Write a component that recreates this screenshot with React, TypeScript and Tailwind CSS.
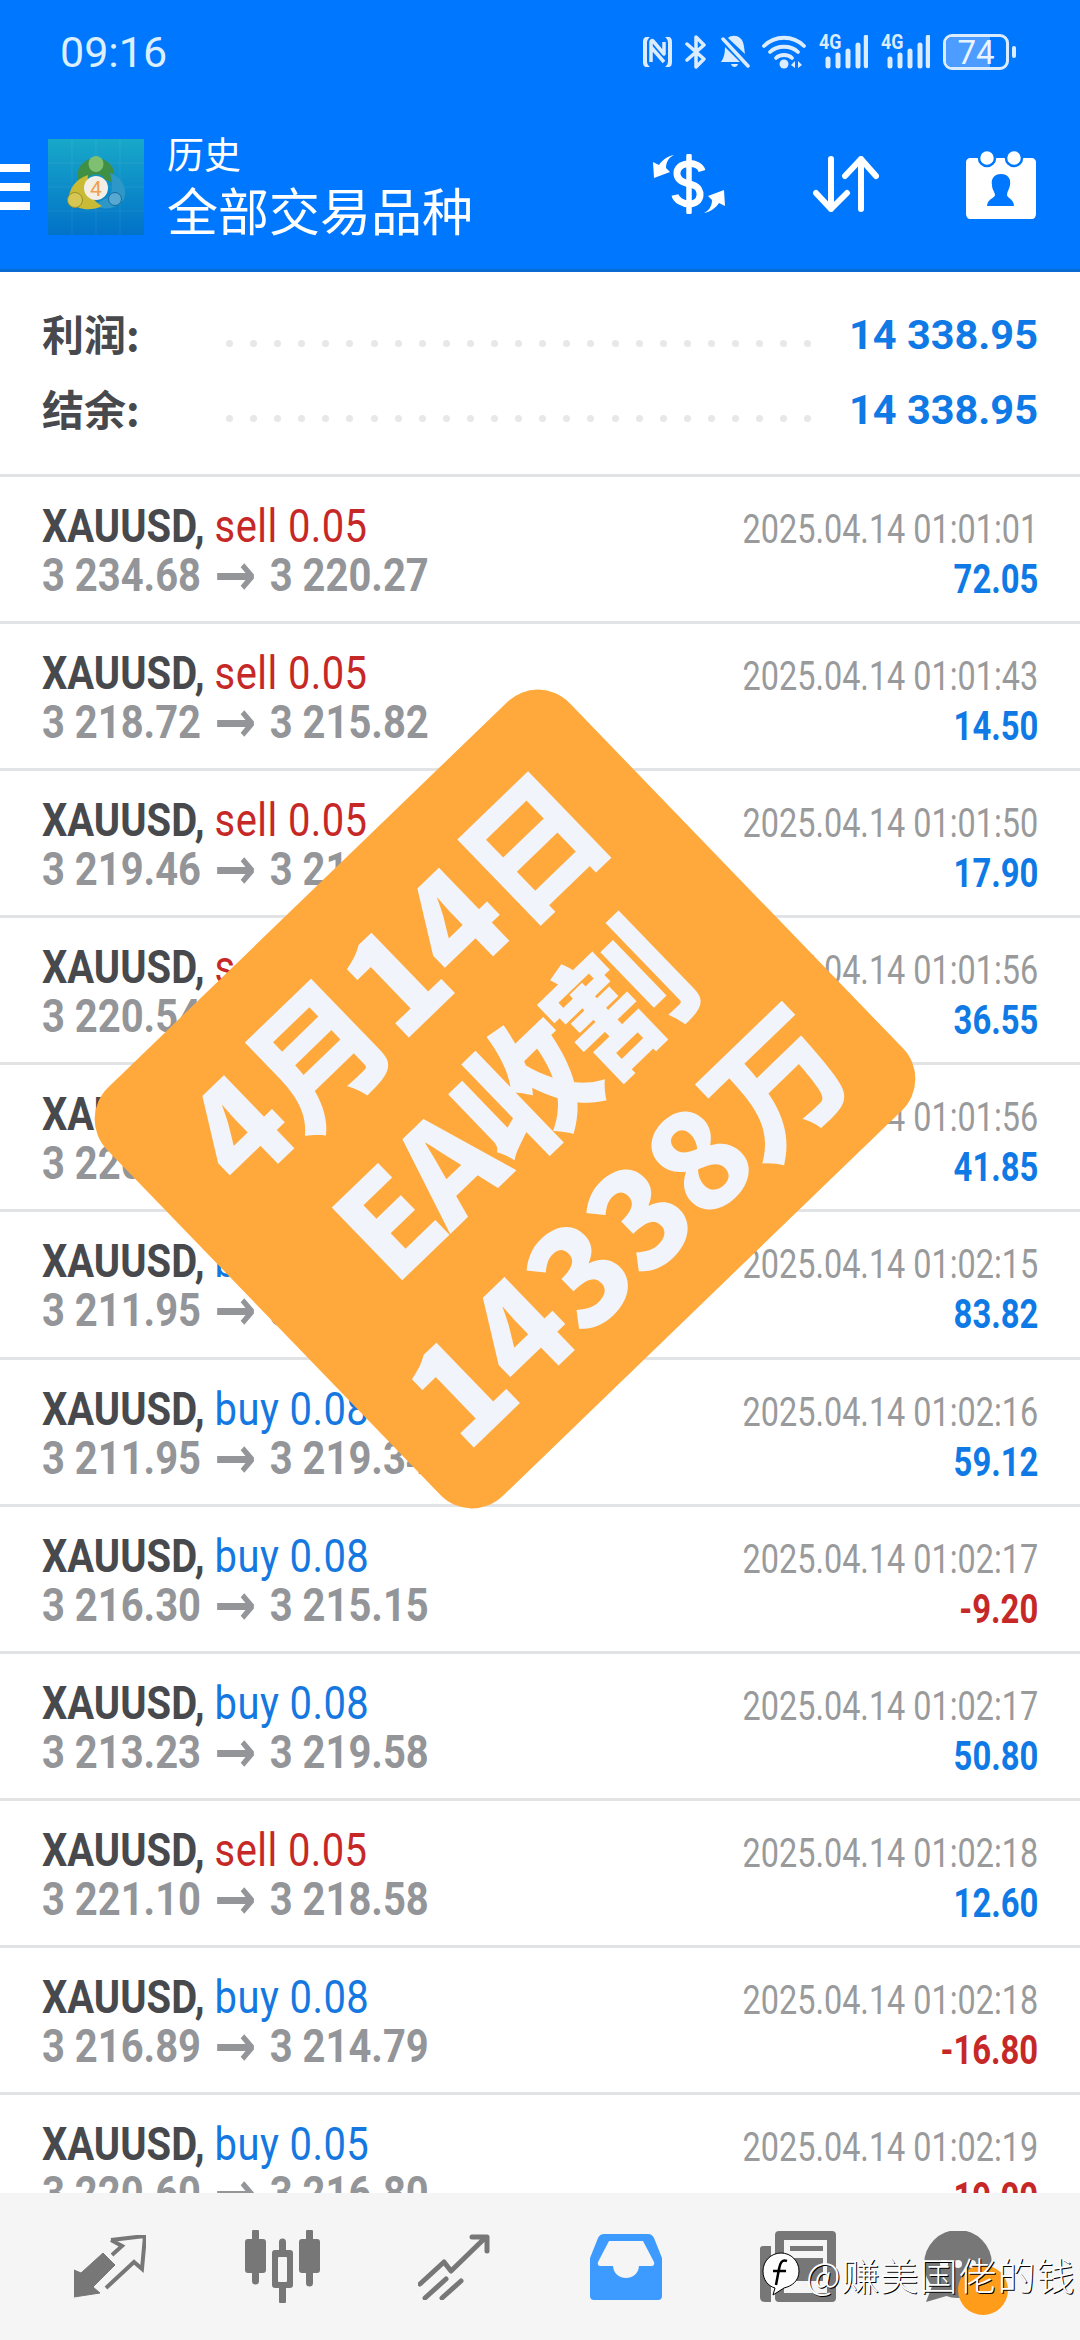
import React from "react";

const rows = [
  { s: "sell 0.05", a: "3 234.68", b: "3 220.27", t: "01:01:01", p: "72.05" },
  { s: "sell 0.05", a: "3 218.72", b: "3 215.82", t: "01:01:43", p: "14.50" },
  { s: "sell 0.05", a: "3 219.46", b: "3 215.88", t: "01:01:50", p: "17.90" },
  { s: "sell 0.05", a: "3 220.54", b: "3 213.23", t: "01:01:56", p: "36.55" },
  { s: "sell 0.05", a: "3 220.60", b: "3 212.23", t: "01:01:56", p: "41.85" },
  { s: "buy 0.08", a: "3 211.95", b: "3 222.43", t: "01:02:15", p: "83.82" },
  { s: "buy 0.08", a: "3 211.95", b: "3 219.34", t: "01:02:16", p: "59.12" },
  { s: "buy 0.08", a: "3 216.30", b: "3 215.15", t: "01:02:17", p: "-9.20" },
  { s: "buy 0.08", a: "3 213.23", b: "3 219.58", t: "01:02:17", p: "50.80" },
  { s: "sell 0.05", a: "3 221.10", b: "3 218.58", t: "01:02:18", p: "12.60" },
  { s: "buy 0.08", a: "3 216.89", b: "3 214.79", t: "01:02:18", p: "-16.80" },
  { s: "buy 0.05", a: "3 220.60", b: "3 216.80", t: "01:02:19", p: "-19.00" },
];

const ST = "#dcecff";

function Signal() {
  return (
    <div className="relative w-[49px] h-[34px]">
      <span className="absolute left-0 -top-[3px] text-[21px] leading-[20px] font-bold text-[#dcecff] font-['Roboto',sans-serif] scale-x-[.85] origin-left">4G</span>
      <svg width="49" height="34" viewBox="0 0 49 34" className="absolute left-0 top-0">
        <g stroke={ST} strokeWidth="5" strokeLinecap="round">
          <path d="M9 24V31M19 20V31M29 16V31M39 10V31" />
          <path d="M47 2V31" strokeWidth="4.5" />
        </g>
      </svg>
    </div>
  );
}

function StatusIcons() {
  return (
    <div className="flex items-center">
      <svg width="31" height="32" viewBox="0 0 31 32">
        <path d="M8 1H5C2 1 1 3 1 6V26C1 29 2 31 5 31H8C6 29 5 28 5 25V7C5 4 6 3 8 1Z" fill={ST} />
        <path d="M23 1H26C29 1 30 3 30 6V26C30 29 29 31 26 31H23C25 29 26 28 26 25V7C26 4 25 3 23 1Z" fill={ST} />
        <path d="M9 26V6C9 5 10 4 11 5L22 18V6M22 26L9 11" stroke={ST} strokeWidth="3.5" fill="none" strokeLinejoin="round" />
      </svg>
      <svg width="22" height="34" viewBox="0 0 22 34" className="ml-[12px]">
        <path d="M2 9L19 24L11 32V2L19 10L2 25" stroke={ST} strokeWidth="3.5" fill="none" strokeLinecap="round" strokeLinejoin="round" />
      </svg>
      <svg width="30" height="34" viewBox="0 0 30 34" className="ml-[13px]">
        <path d="M3 4L28 31" stroke={ST} strokeWidth="3.5" strokeLinecap="round" />
        <path d="M8 3C11 0 17 0 20 3C24 6 24 12 25 19ZM5 12L20 27H1C4 23 5 18 5 12ZM11 29H18C17 33 12 33 11 29Z" fill={ST} />
      </svg>
      <svg width="44" height="34" viewBox="0 0 44 34" className="ml-[12px]">
        <g stroke={ST} strokeWidth="3.8" fill="none" strokeLinecap="round">
          <path d="M2 11C13 0 31 0 42 11" />
          <path d="M8 17C15 10 29 10 36 17" />
          <path d="M14 23C18 19 26 19 30 23" />
        </g>
        <circle cx="22" cy="29" r="4.5" fill={ST} />
        <path d="M33 26V33L29 30ZM36 26V33L40 30Z" fill={ST} />
      </svg>
      <div className="ml-[13px]"><Signal /></div>
      <div className="ml-[13px]"><Signal /></div>
      <div className="ml-[13px] relative w-[66px] h-[36px] rounded-[9px] border-[3px] border-[#dcecff] overflow-hidden flex items-center justify-center">
        <div className="absolute left-0 top-0 bottom-0 w-[74%] bg-[#4d9cff]" />
        <span className="relative text-[33px] leading-[33px] text-[#eaf4ff] font-['Roboto',sans-serif]">74</span>
      </div>
      <div className="ml-[3px] w-[4px] h-[12px] rounded-[2px] bg-[#dcecff]" />
    </div>
  );
}

function Logo() {
  return (
    <svg width="96" height="96" viewBox="0 0 96 96" className="ml-[18px] shrink-0">
      <defs>
        <linearGradient id="bgl" x1="0" y1="0" x2="0" y2="1">
          <stop offset="0" stopColor="#18a8c8" />
          <stop offset="1" stopColor="#0272c8" />
        </linearGradient>
      </defs>
      <rect width="96" height="96" fill="url(#bgl)" />
      <path d="M24 0V96M48 0V96M72 0V96M0 24H96M0 48H96M0 72H96" stroke="#ffffff" strokeOpacity=".07" strokeWidth="1" />
      <path d="M31 44C26 28 36 20 48 19C60 20 70 28 65 44L56 40C56 34 40 34 40 40Z" fill="#3f8f45" />
      <ellipse cx="48" cy="25" rx="7.5" ry="8" fill="#7fbf72" />
      <path d="M62 34C74 38 80 50 76 60C70 70 56 72 46 66L56 60C64 58 66 48 62 34Z" fill="#2d97c8" />
      <circle cx="67" cy="60" r="6.5" fill="#58a9d2" stroke="#17699f" strokeWidth="1" />
      <path d="M40 36C28 40 20 50 21 62C30 72 44 72 54 67C44 62 38 50 40 36Z" fill="#c9bb35" />
      <circle cx="27" cy="61" r="7.5" fill="#d6c755" stroke="#97902a" strokeWidth="1" />
      <circle cx="48" cy="49" r="12" fill="#f3efe6" />
      <text x="48" y="57" textAnchor="middle" fontSize="21" fontFamily="Roboto" fill="#f0a050">4</text>
    </svg>
  );
}

function DollarIcon() {
  const arrow = "M21 1C15 4 13 9 13 14L17 18L1 24L0 8L6 11C9 6 15 2 21 1Z";
  return (
    <svg width="72" height="60" viewBox="0 0 72 60">
      <path d="M36 2V58" stroke="#fff" strokeWidth="5.5" strokeLinecap="round" />
      <path d="M49 17C46 7 26 7 24 18C23 28 34 29 40 31C50 34 50 50 36 50C30 50 23 46 22 41" stroke="#fff" strokeWidth="7" fill="none" />
      <path d={arrow} fill="#fff" />
      <path d={arrow} fill="#fff" transform="rotate(180 36 30)" />
    </svg>
  );
}

function SortIcon() {
  return (
    <svg width="66" height="56" viewBox="0 0 66 56" className="ml-[88px]">
      <g stroke="#fff" strokeWidth="6" fill="none" strokeLinecap="round" strokeLinejoin="round">
        <path d="M18 3V53M3 37L18 53L34 37" />
        <path d="M48 53V3M32 20L48 3L63 20" />
      </g>
    </svg>
  );
}

function CalIcon() {
  return (
    <svg width="70" height="70" viewBox="0 0 70 70" className="ml-[87px]">
      <path d="M4 9H66C68 9 70 11 70 13V65C70 68 68 70 66 70H4C2 70 0 68 0 65V13C0 11 2 9 4 9Z" fill="#fff" />
      <circle cx="21" cy="9" r="8" fill="#fff" stroke="#0077ff" strokeWidth="2.5" />
      <circle cx="48" cy="9" r="8" fill="#fff" stroke="#0077ff" strokeWidth="2.5" />
      <path d="M35 25C43 25 45 31 44 36C43 41 41 43 41 46C41 49 48 50 48 57H21C21 50 29 49 29 46C29 43 26 41 26 36C25 31 27 25 35 25Z" fill="#0077ff" />
    </svg>
  );
}

function Row({ r }: { r: (typeof rows)[number] }) {
  const sell = r.s.startsWith("sell");
  const neg = r.p.startsWith("-");
  return (
    <div className="h-[147.1px] shrink-0 border-b-[3px] border-[#e2e3e4] flex justify-between pl-[42px] pr-[42px] font-['Roboto',sans-serif]">
      <div className="pt-[24px]">
        <div className="h-[50px] text-[47px] leading-[50px] whitespace-nowrap origin-left scale-x-[.85]">
          <span className="font-bold text-[#48494c]">XAUUSD, </span>
          <span className={sell ? "text-[#c62828] tracking-[0.5px]" : "text-[#1478e0] tracking-[0.5px]"}>{r.s}</span>
        </div>
        <div className="h-[48px] text-[47px] leading-[48px] whitespace-nowrap origin-left scale-x-[.85] font-bold text-[#939598]">
          {r.a} <span className="relative top-[4px] mx-[4px] font-['DejaVu_Sans',sans-serif] text-[59px] leading-[0]">→</span> {r.b}
        </div>
      </div>
      <div className="pt-[29px] flex flex-col items-end">
        <div className="h-[46px] text-[41px] leading-[46px] whitespace-nowrap origin-right scale-x-[.79] text-[#999a9b]">2025.04.14 {r.t}</div>
        <div className="h-[50px] pt-[3px] text-[40px] leading-[50px] whitespace-nowrap origin-right scale-x-[.82] font-bold">
          <span className={neg ? "text-[#c62828]" : "text-[#0f7ae5]"}>{r.p}</span>
        </div>
      </div>
    </div>
  );
}

function Summary({ label }: { label: string }) {
  return (
    <div className="h-[75px] flex items-center pl-[42px] pr-[42px]">
      <span className="w-[184px] -mt-[6px] text-[42px] font-bold text-[#48494c] font-['Noto_Sans_CJK_SC',sans-serif]">{label}</span>
      <div className="flex gap-[17.1px] pt-[16px]">
        {Array.from({ length: 25 }).map((_, i) => (
          <span key={i} className="w-[7px] h-[7px] rounded-full bg-[#e8e8e8]" />
        ))}
      </div>
      <span className="ml-auto text-[41.5px] font-bold text-[#0f7ae5] font-['Roboto',sans-serif]">14 338.95</span>
    </div>
  );
}

function Nav() {
  return (
    <div className="h-[147px] shrink-0 bg-[#f5f5f5] grid grid-cols-6 px-[24px] items-center justify-items-center relative">
      <svg width="72" height="64" viewBox="0 0 72 64">
        <path d="M0 62V35L7 38L29 18L41 30L19 52L26 58Z" fill="#777" stroke="#777" strokeWidth="1" strokeLinejoin="round" />
        <path d="M37 5L71 1L68 34L60 27L32 53M38 20L48 11L37 5" stroke="#777" strokeWidth="4" fill="none" />
      </svg>
      <svg width="75" height="73" viewBox="0 0 75 73">
        <path d="M10.5 2V51M37.5 12V71M64.5 2V53" stroke="#777" strokeWidth="7" strokeLinecap="round" />
        <rect x="0" y="9" width="21" height="34" rx="3" fill="#777" />
        <rect x="54" y="9" width="21" height="34" rx="3" fill="#777" />
        <rect x="27" y="20" width="21" height="38" rx="3" fill="#777" />
        <rect x="33" y="27" width="9" height="25" rx="1" fill="#f5f5f5" />
      </svg>
      <svg width="72" height="66" viewBox="0 0 72 66">
        <path d="M2 50L26 28L33 37L67 4M54 3H69V17M7 64L28 45M24 64L43 47" stroke="#777" strokeWidth="5" fill="none" strokeLinecap="round" strokeLinejoin="round" />
      </svg>
      <svg width="72" height="66" viewBox="0 0 72 66">
        <path fillRule="evenodd" d="M14 0H58Q62 0 64 4L72 24V62Q72 66 68 66H4Q0 66 0 62V24L8 4Q10 0 14 0ZM19 7L8 28Q7 32 11 32H23C24 48 48 48 49 32H61Q65 32 64 28L53 7Z" fill="#3d9bff" />
      </svg>
      <svg width="76" height="71" viewBox="0 0 76 71">
        <path d="M0 18Q0 15 3 15H11V71H5Q0 71 0 66Z" fill="#777" />
        <path fillRule="evenodd" d="M19 0H72Q76 0 76 4V67Q76 71 72 71H19Q15 71 15 67V4Q15 0 19 0ZM24 9V62H67V9Z" fill="#777" />
        <path d="M30 15H63V20H30ZM30 27H63V50H30Z" fill="#777" />
      </svg>
      <div className="relative w-[72px] h-[72px] mr-[24px]">
        <svg width="72" height="72" viewBox="0 0 72 72">
          <circle cx="36" cy="33" r="34" fill="#777" />
          <path d="M12 50L4 71L28 64Z" fill="#777" />
          <circle cx="22" cy="33" r="4" fill="#f5f5f5" />
          <circle cx="36" cy="33" r="4" fill="#f5f5f5" />
          <circle cx="50" cy="33" r="4" fill="#f5f5f5" />
        </svg>
        <span className="absolute left-[36px] top-[34px] w-[50px] h-[50px] rounded-full bg-[#ff9c1a]" />
      </div>
    </div>
  );
}

export default function App() {
  return (
    <div className="relative w-[1080px] h-[2340px] overflow-hidden bg-white flex flex-col">
      <header className="h-[272px] shrink-0 bg-[#0077ff] border-b-[3px] border-[#0a69d2] flex flex-col">
        <div className="h-[104px] flex items-center justify-between pl-[60px] pr-[64px]">
          <span className="text-[43px] text-[#dcefff] font-['Roboto',sans-serif]">09:16</span>
          <StatusIcons />
        </div>
        <div className="flex-1 flex items-center pr-[44px]">
          <div className="flex flex-col gap-[11px] shrink-0">
            <span className="w-[30px] h-[8px] bg-white" />
            <span className="w-[30px] h-[8px] bg-white" />
            <span className="w-[30px] h-[8px] bg-white" />
          </div>
          <Logo />
          <div className="ml-[23px] flex flex-col text-white font-['Noto_Sans_CJK_SC',sans-serif]">
            <span className="text-[37px] leading-[46px] -mt-[3px]">历史</span>
            <span className="text-[51px] leading-[62px] mt-[2px]">全部交易品种</span>
          </div>
          <div className="ml-auto mb-[6px] flex items-center">
            <DollarIcon />
            <SortIcon />
            <CalIcon />
          </div>
        </div>
      </header>

      <section className="h-[205px] shrink-0 border-b-[3px] border-[#e2e3e4] pt-[26px]">
        <Summary label="利润:" />
        <Summary label="结余:" />
      </section>

      <main className="flex-1 overflow-hidden flex flex-col">
        {rows.map((r, i) => (
          <Row key={i} r={r} />
        ))}
      </main>

      <Nav />

      <div className="absolute left-[505px] top-[1099px] -translate-x-1/2 -translate-y-1/2 w-[643px] h-[568px] rounded-[44px] bg-[#ffa93c] -rotate-[44deg] flex flex-col items-center justify-center text-[#f1f5fb] font-black text-[136px] leading-[170px] whitespace-nowrap font-['Noto_Sans_CJK_SC',sans-serif]">
        <div className="ml-[8px] tracking-[-1px]">4月14日</div>
        <div className="tracking-[-6px]">EA收割</div>
        <div>14338万</div>
      </div>

      <div className="absolute left-[762px] top-[2252px] flex items-center text-white font-['Noto_Sans_CJK_SC',sans-serif] [text-shadow:1px_1px_0_#000]">
        <svg width="38" height="44" viewBox="0 0 38 44">
          <path d="M19 1C29 1 37 9 37 19C37 29 30 34 22 36L11 43L13 36C6 34 1 28 1 19C1 9 9 1 19 1Z" fill="#fff" stroke="#000" strokeWidth="1" />
          <path d="M25 9C20 7 18 11 17 17L14 33M11 19H24" stroke="#000" strokeWidth="2.5" fill="none" />
        </svg>
        <span className="ml-[6px] text-[38px] leading-[44px] font-light tracking-[1px]">@赚美国佬的钱</span>
      </div>
    </div>
  );
}
